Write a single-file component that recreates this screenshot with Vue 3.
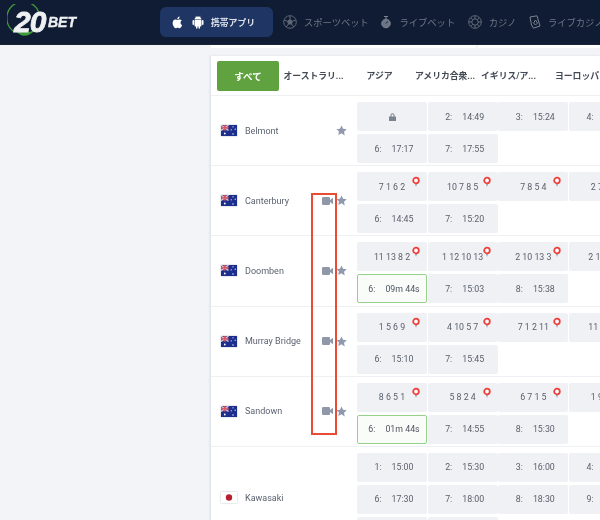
<script setup>
const au = 'au'
const jp = 'jp'
const t = (n, time) => ({ n, time })
const p = (nums) => ({ nums })
const rows = [
  { name: 'Belmont', flag: au, cam: false, fav: true, cells: [{ lock: true }, t(2, '14:49'), t(3, '15:24'), t(4, '15:59'), t(5, '16:38'), t(6, '17:17'), t(7, '17:55')] },
  { name: 'Canterbury', flag: au, cam: true, fav: true, cells: [p('7 1 6 2'), p('10 7 8 5'), p('7 8 5 4'), p('2 7 1 4'), p('3 1 6 5'), t(6, '14:45'), t(7, '15:20')] },
  { name: 'Doomben', flag: au, cam: true, fav: true, cells: [p('11 13 8 2'), p('1 12 10 13'), p('2 10 13 3'), p('2 13 8 1'), p('4 2 9 6'), { n: 6, time: '09m 44s', live: true }, t(7, '15:03'), t(8, '15:38')] },
  { name: 'Murray Bridge', flag: au, cam: true, fav: true, cells: [p('1 5 6 9'), p('4 10 5 7'), p('7 1 2 11'), p('11 9 3 5'), p('2 6 1 4'), t(6, '15:10'), t(7, '15:45')] },
  { name: 'Sandown', flag: au, cam: true, fav: true, cells: [p('8 6 5 1'), p('5 8 2 4'), p('6 7 1 5'), p('1 9 4 6'), p('3 2 8 7'), { n: 6, time: '01m 44s', live: true }, t(7, '14:55'), t(8, '15:30')] },
  { name: 'Kawasaki', flag: jp, cam: false, fav: false, cells: [t(1, '15:00'), t(2, '15:30'), t(3, '16:00'), t(4, '16:30'), t(5, '17:00'), t(6, '17:30'), t(7, '18:00'), t(8, '18:30'), t(9, '19:00'), t(10, '19:30'), t(11, '20:00'), t(12, '20:30')] },
]
const tabs = ['オーストラリ...', 'アジア', 'アメリカ合衆...', 'イギリス/ア...', 'ヨーロッパ']
</script>

<template>
  <div class="page">
    <header class="top">
      <div class="logo">
        <svg class="ring" width="36" height="36" viewBox="0 0 36 36">
          <path d="M6 27 A16.500 16.500 0 1 1 32 9" fill="none" stroke="#3f9a3a" stroke-width="1.300" />
          <path d="M7 25 Q18 40 32 22 Q22 33 7 25Z" fill="#3f9a3a" />
        </svg>
        <span class="twenty">20</span>
        <span class="bet">BET</span>
      </div>
      <div class="app-btn">
        <svg width="12" height="13" viewBox="0 0 24 26" fill="#fff"><path d="M17 13.600c0-3 2.400-4.400 2.500-4.500-1.400-2-3.500-2.300-4.300-2.300-1.800-.2-3.500 1.100-4.400 1.100-.9 0-2.300-1-3.800-1-2 0-3.800 1.100-4.800 2.900-2 3.500-.5 8.800 1.500 11.700 1 1.400 2.200 3 3.700 3 1.500-.1 2-1 3.800-1s2.300 1 3.800 1c1.600 0 2.600-1.400 3.600-2.900 1.100-1.600 1.600-3.200 1.600-3.300-.1 0-3.200-1.200-3.200-4.700zM14 4.800c.8-1 1.400-2.400 1.200-3.800-1.200 0-2.600.8-3.500 1.800-.8.9-1.400 2.300-1.200 3.700 1.300.1 2.700-.7 3.500-1.700z"/></svg>
        <svg class="android" width="12" height="14" viewBox="0 0 24 28" fill="#fff"><path d="M6 10h12a1 1 0 0 1 1 1v10a2 2 0 0 1-2 2h-1v3a1.500 1.500 0 0 1-3 0v-3h-2v3a1.500 1.500 0 0 1-3 0v-3H7a2 2 0 0 1-2-2V11a1 1 0 0 1 1-1zM2.500 10A1.500 1.500 0 0 1 4 11.500v7a1.500 1.500 0 0 1-3 0v-7A1.500 1.500 0 0 1 2.500 10zm19 0a1.500 1.500 0 0 1 1.500 1.500v7a1.500 1.500 0 0 1-3 0v-7a1.500 1.500 0 0 1 1.500-1.500zM5 9c.2-2.300 1.500-4 3.300-5L7 2l.6-.4 1.400 2a8 8 0 0 1 6 0l1.400-2 .6.4-1.300 2c1.800 1 3.100 2.700 3.300 5H5z"/></svg>
        <span>携帯アプリ</span>
      </div>
      <nav class="nav">
        <span class="nav-item">
          <svg width="14" height="14" viewBox="0 0 14 14" fill="none" stroke="#5f6876"><circle cx="7" cy="7" r="6.300" /><path d="M7 4.500 9.400 6.200 8.500 9H5.500L4.600 6.200Z" fill="#5f6876" /><path d="M7 .8V4.500M9.400 6.200 13 5M8.500 9 10.800 12M5.500 9 3.200 12M4.600 6.200 1 5" /></svg>
          スポーツベット
        </span>
        <span class="nav-item">
          <svg class="timer" width="11" height="14" viewBox="0 0 11 14" fill="none" stroke="#7a8391"><circle cx="5" cy="8.500" r="4.300" fill="#6d7684" /><path d="M3 1.500h4M5 1.500v3" /><path d="M5 8.500 6.500 6.500" stroke="#101c33" /></svg>
          ライブベット
        </span>
        <span class="nav-item">
          <svg width="14" height="14" viewBox="0 0 14 14" fill="none" stroke="#5f6876"><circle cx="7" cy="7" r="6.300" /><circle cx="7" cy="7" r="3.200" /><path d="M7 .8V4M7 10v3.200M.8 7H4M10 7h3.200M2.600 2.600 4.700 4.700M9.300 9.300l2.100 2.100M11.400 2.600 9.300 4.700M4.700 9.300l-2.100 2.100" /></svg>
          カジノ
        </span>
        <span class="nav-item">
          <svg width="12" height="14" viewBox="0 0 12 14" fill="none" stroke="#7a8391"><path d="M1 2 8 .8 11 11 4.500 13.200 2.500 10Z" /><path d="M6.500 5 8.500 8 6.500 10 4.600 8Z" /></svg>
          ライブカジノ
        </span>
      </nav>
    </header>

    <main class="content">
      <div class="strip">
        <div class="strip-a"></div>
        <div class="strip-b"></div>
      </div>
      <section class="board">
        <div class="tabs">
          <button class="all">すべて</button>
          <span v-for="tab in tabs" :key="tab" class="tab">{{ tab }}</span>
        </div>
        <div v-for="row in rows" :key="row.name" class="row">
          <div class="info">
            <svg v-if="row.flag === 'au'" class="flag" width="16" height="11" viewBox="0 0 16 11">
              <rect width="16" height="11" fill="#1c2f8f" />
              <rect width="7.500" height="5.500" fill="#5a4f8e" />
              <path d="M0 0 7.500 5.500M7.500 0 0 5.500" stroke="#e7c9d2" stroke-width="1.100" />
              <path d="M3.750 0V5.500M0 2.750H7.500" stroke="#d9566b" stroke-width="1.300" />
              <g fill="#fff">
                <circle cx="3.800" cy="8.500" r=".9" />
                <circle cx="12" cy="1.800" r=".6" />
                <circle cx="14.200" cy="4.200" r=".6" />
                <circle cx="10.200" cy="4.800" r=".6" />
                <circle cx="12" cy="9" r=".7" />
              </g>
            </svg>
            <svg v-else class="flag" width="16" height="11" viewBox="0 0 16 11">
              <rect width="16" height="11" fill="#fff" />
              <circle cx="8" cy="5.500" r="3.200" fill="#b8202f" />
            </svg>
            <span class="name">{{ row.name }}</span>
            <svg v-if="row.cam" class="cam" width="11" height="8" viewBox="0 0 11 8" fill="#8f98a8">
              <rect width="8" height="8" rx="1.300" />
              <path d="M8 3 11 .7V7.300L8 5Z" />
            </svg>
            <svg v-if="row.fav" class="star" width="11" height="11" viewBox="0 0 24 24" fill="#8f98ae">
              <path d="M12 1l3.400 7.300 7.900 1-5.800 5.500 1.500 7.900L12 17.900l-7 3.800 1.500-7.900L.7 9.300l7.900-1z" />
            </svg>
          </div>
          <div class="cells">
            <div v-for="(c, i) in row.cells" :key="i" class="cell" :class="{ live: c.live, timed: c.time }">
              <svg v-if="c.lock" width="7" height="8" viewBox="0 0 7 8" fill="#7b8290">
                <path d="M1.500 3.500V2.300a2 2 0 0 1 4 0v1.200H7V8H0V3.500ZM2.500 3.500h2V2.300a1 1 0 0 0-2 0Z" fill-rule="evenodd" />
              </svg>
              <template v-else-if="c.nums">
                <span>{{ c.nums }}</span>
                <svg class="pin" width="10" height="12" viewBox="0 0 10 12">
                  <path d="M4 8h2L5 11Z" fill="#9aa0aa" />
                  <circle cx="5" cy="4.500" r="2.800" fill="#fff" stroke="#ef3f3a" stroke-width="1.800" />
                </svg>
              </template>
              <template v-else>
                <span class="num">{{ c.n }}:</span>
                <span>{{ c.time }}</span>
              </template>
            </div>
          </div>
        </div>
      </section>
    </main>
    <div class="mark"></div>
  </div>
</template>

<style>
html, body { margin: 0; overflow: hidden; background: #f3f4f8; }
</style>

<style scoped>
.page {
  position: relative;
  width: 600px;
  height: 520px;
  overflow: hidden;
  background: #f3f4f8;
  font-family: Roboto, "Noto Sans CJK JP", sans-serif;
  filter: blur(0.3px);
}
.top {
  height: 45px;
  background: #101c33;
  display: flex;
  align-items: center;
  border-bottom: 1px solid #1a2436;
  box-sizing: border-box;
}
.logo {
  position: relative;
  width: 160px;
  height: 45px;
  display: flex;
  align-items: center;
  padding-left: 14px;
  box-sizing: border-box;
  flex: none;
  font-family: "Liberation Sans", sans-serif;
  font-style: italic;
  font-weight: 700;
  color: #eef0f2;
}
.ring { position: absolute; left: 7px; top: 4px; }
.twenty { position: relative; font-size: 30px; letter-spacing: -1px; width: 34px; -webkit-text-stroke: 0.8px #eef0f2; }
.bet { font-size: 14px; -webkit-text-stroke: 0.4px #eef0f2; }
.app-btn {
  width: 113px;
  height: 30px;
  background: #1f3563;
  border-radius: 6px;
  display: flex;
  align-items: center;
  padding-left: 12px;
  box-sizing: border-box;
  color: #dde2ea;
  font-size: 8.800px;
  font-weight: 700;
  flex: none;
}
.android { margin-left: 8px; margin-right: 7px; }
.nav { display: flex; align-items: center; margin-left: 10px; color: #6f7886; font-size: 9.300px; white-space: nowrap; }
.nav-item { display: flex; align-items: center; gap: 7px; margin-right: 12.500px; }
.content { margin-left: 211px; }
.strip { display: flex; gap: 2px; height: 3px; margin-bottom: 8px; }
.strip-a { width: 265px; background: #fff; }
.strip-b { flex: 1; background: #fff; }
.board { background: #fff; box-shadow: -1px 0 2px rgba(120, 130, 160, .2); }
.tabs {
  height: 40px;
  display: flex;
  align-items: center;
  padding-left: 6px;
  box-sizing: border-box;
  border-bottom: 1px solid #eef0f4;
  white-space: nowrap;
}
.all {
  width: 62px;
  height: 30px;
  border: 0;
  padding: 0;
  border-radius: 2px;
  background: #5fa23f;
  color: #fff;
  font: 700 9.500px Roboto, "Noto Sans CJK JP", sans-serif;
  flex: none;
}
.tab {
  flex: none;
  text-align: center;
  color: #434955;
  font-size: 8.800px;
  font-weight: 700;
}
.tab:nth-of-type(1) { width: 69px; }
.tab:nth-of-type(2) { width: 63px; }
.tab:nth-of-type(3) { width: 68px; }
.tab:nth-of-type(4) { width: 59px; }
.tab:nth-of-type(5) { width: 78px; }
.row {
  box-sizing: border-box;
  display: flex;
  align-items: center;
  border-bottom: 1px solid #eef0f4;
  width: 560px;
}
.info {
  width: 146px;
  flex: none;
  display: flex;
  align-items: center;
  padding: 0 10px;
  box-sizing: border-box;
}
.flag { flex: none; box-shadow: 0 0 1.500px rgba(90, 100, 120, .5); }
.name { margin-left: 8px; flex: 1; font-size: 9px; color: #5b6270; white-space: nowrap; }
.cam { flex: none; margin-right: 3px; }
.star { flex: none; }
.cells {
  display: grid;
  grid-template-columns: repeat(5, 70px);
  gap: 3px 0.67px;
  padding: 6px 0 2.200px;
}
.cell {
  position: relative;
  height: 29px;
  box-sizing: border-box;
  background: #f0f1f5;
  border-radius: 2px;
  display: flex;
  align-items: center;
  justify-content: center;
  font-size: 8.800px;
  color: #5a606c;
  white-space: nowrap;
}
.timed { padding-left: 4px; }
.num { margin-right: 10px; }
.pin { position: absolute; left: 54px; top: 4px; }
.live {
  background: #fafcfa;
  border: 1px solid #96d18a;
  color: #4e5460;
}
.mark {
  position: absolute;
  left: 311px;
  top: 193px;
  width: 26px;
  height: 242px;
  box-sizing: border-box;
  border: 2px solid #ea4b35;
}
</style>
